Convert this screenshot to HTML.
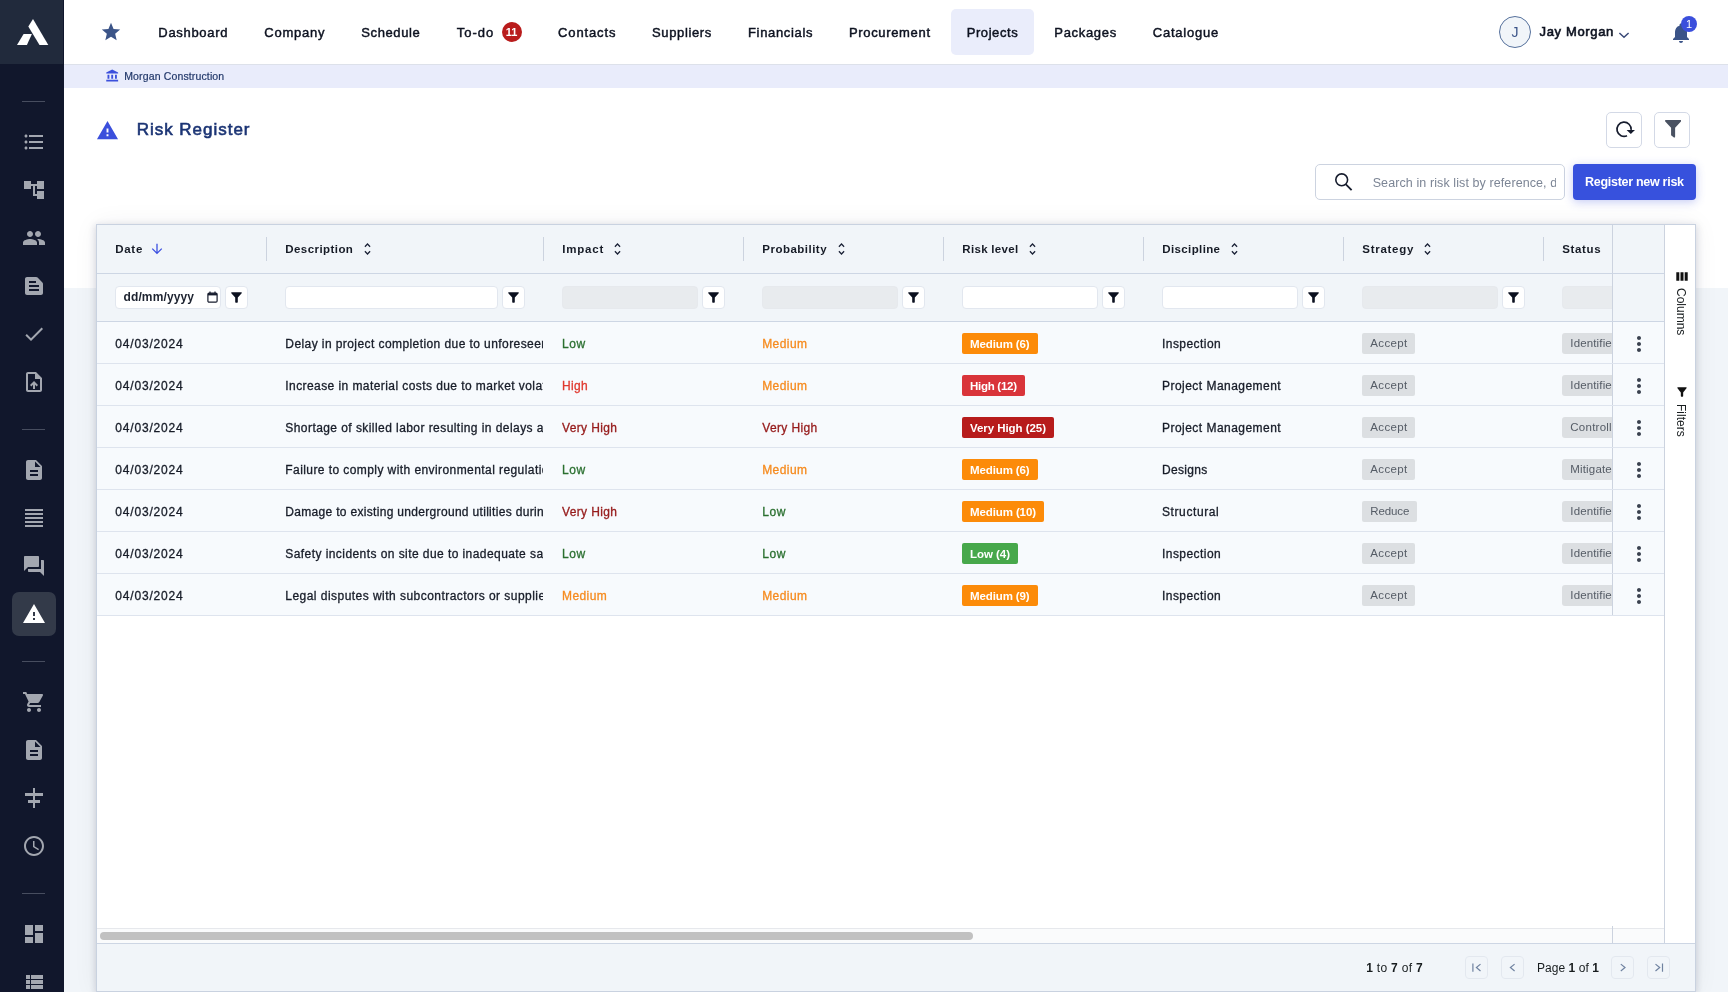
<!DOCTYPE html>
<html lang="en">
<head>
<meta charset="utf-8">
<title>Risk Register</title>
<style>
*{box-sizing:border-box;margin:0;padding:0}
html,body{width:1728px;height:992px;overflow:hidden}
body{font-family:"Liberation Sans",sans-serif;font-size:13px;color:#181d1f;background:#f1f5f9;position:relative}
svg{display:block}
#app{position:absolute;left:0;top:0;width:1728px;height:992px;overflow:hidden;will-change:transform}
b{font-weight:700}
.abs{position:absolute;white-space:nowrap}
/* sidebar */
#side{position:absolute;left:0;top:0;width:64px;height:992px;background:#11172c}
#logo{position:absolute;left:0;top:0;width:62.5px;height:64px;background:#212a3c;overflow:hidden}
.sdiv{position:absolute;left:22px;width:23px;height:1px;background:#474d5f}
#sact{position:absolute;left:12px;top:592px;width:44px;height:44px;border-radius:7px;background:#333a49}
/* top bar */
#top{position:absolute;left:64px;top:0;width:1664px;height:65px;background:#fff;border-bottom:1px solid #dde1ea}
.nav{height:20px;line-height:20px;font-size:13px;color:#0d1220;-webkit-text-stroke:.45px #0d1220}
.usr{-webkit-text-stroke:.6px #0d1220}
#projbox{position:absolute;left:887px;top:9px;width:83px;height:46px;border-radius:5px;background:#eaedfb}
.nbadge{width:20px;height:20px;line-height:20px;text-align:center;font-size:11px;font-weight:700;color:#fff}
.avj{width:32px;height:32px;line-height:32px;text-align:center;font-size:14px;color:#3b5488}
.bbadge{width:16px;height:16px;line-height:16px;text-align:center;font-size:11px;color:#fff}
#crumb{position:absolute;left:64px;top:65px;width:1664px;height:23px;background:#e9ecfb}
.crt{height:14px;line-height:14px;font-size:10.5px;color:#22386a;-webkit-text-stroke:.2px #22386a}
#white{position:absolute;left:64px;top:88px;width:1664px;height:200px;background:#fff}
.ttl{height:24px;line-height:24px;font-size:17px;color:#1b3474;-webkit-text-stroke:.6px #1b3474}
.tbtn{position:absolute;width:36px;height:36px;border:1px solid #d3d9e6;border-radius:5px;background:#fff}
#search{position:absolute;left:1251px;top:76px;width:250px;height:36px;border:1px solid #ccd3e0;border-radius:5px;background:#fff;overflow:hidden}
.pht{width:183.500px;overflow:hidden;height:18px;line-height:18px;font-size:12.5px;color:#7c8595}
#regbtn{position:absolute;left:1509px;top:76px;width:123px;height:36px;border-radius:4px;background:#3751dd;box-shadow:0 2px 10px rgba(59,79,220,.3)}
.regt{height:18px;line-height:18px;font-size:12.5px;font-weight:700;color:#fff}
/* grid */
#grid{position:absolute;left:96px;top:224px;width:1600px;height:768px;background:#fff;border:1px solid #c9d2e0;box-shadow:0 2px 7px 1px rgba(20,30,60,.15),0 0 24px rgba(20,30,60,.06)}
#ghead{position:absolute;left:0;top:0;width:1567px;height:49px;background:#f1f5f9;border-bottom:1px solid #cdd6e4}
#gfilt{position:absolute;left:0;top:49px;width:1567px;height:48px;background:#f1f5f9;border-bottom:1px solid #cdd6e4;overflow:hidden}
.hsep{position:absolute;top:12px;width:1px;height:24px;background:#ccd3df}
.ht{height:18px;line-height:18px;font-size:11.5px;font-weight:700;color:#161b26}
.fin{position:absolute;top:11.500px;height:23.500px;background:#fff;border:1px solid #e2e7ef;border-radius:4px}
.fin.dis{background:#e8ebee;border-color:#e6e9ed}
.fbt{position:absolute;top:11.500px;width:23.300px;height:23.500px;background:#fff;border:1px solid #e2e7ef;border-radius:4px}
.dtt{height:16px;line-height:16px;font-size:12px;font-weight:700;color:#1d2330}
.row{position:absolute;left:0;width:1567px;height:42px;background:#f7fafd;border-bottom:1px solid #dee4ee;overflow:hidden}
.c{height:41px;line-height:44.600px;overflow:hidden;font-size:12px;color:#171c28;-webkit-text-stroke:.3px}
.bd{position:absolute;top:10.500px;height:21px;line-height:22px;border-radius:2px;font-size:11.5px;font-weight:700;color:#fff;white-space:nowrap;overflow:hidden}
.gb{position:absolute;top:10.500px;height:21px;line-height:21px;border-radius:2px;font-size:11.5px;color:#555c66;background:#dcdfe2;white-space:nowrap;overflow:hidden}
.pinh{position:absolute;left:1515px;top:0;width:52px;background:#f1f5f9;border-left:1px solid #ccd3df}
.pin{position:absolute;left:1515px;top:0;width:52px;height:41px;background:#f7fafd;border-left:1px solid #ccd3df}
.lo{color:#2b7030}.me{color:#f68b1f}.hi{color:#e0392f}.vh{color:#961b1b}
.bme{background:#fc8b09}.bhi{background:#d9343a}.bvh{background:#b71c1c}.blo{background:#47a84b}
#hscroll{position:absolute;left:0;top:703px;width:1567px;height:15px;background:#fafbfc;border-top:1px solid #e6e8ec}
#thumb{position:absolute;left:2.500px;top:3px;width:873px;height:8px;border-radius:4px;background:#c1c1c1}
#gside{position:absolute;left:1567px;top:0;width:31px;height:718px;background:#fff;border-left:1px solid #ccd3df}
.vt{writing-mode:vertical-rl;width:16px;line-height:16px;font-size:12px;color:#181d1f}
#pag{position:absolute;left:0;top:718px;width:1598px;height:48px;background:#f1f5f9;border-top:1px solid #cdd6e4}
.pgt{height:18px;line-height:18px;font-size:12px;color:#181d1f}
.pbt{position:absolute;top:12px;width:23px;height:23px;border:1px solid #e3e8ef;border-radius:4px}
</style>
</head>
<body>
<div id="app">
<div id="side">
<div id="logo"><svg width="64" height="64" viewBox="0 0 64 64"><polygon points="33,19 48.3,45 39.5,45 28.3,26.5" fill="#fff"/><polygon points="23.6,34.1 31.9,34.1 26.9,45 17,45" fill="#fff"/></svg></div>
<div id="sact"></div>
<div class="sdiv" style="top:101px"></div>
<div class="sdiv" style="top:429px"></div>
<div class="sdiv" style="top:661px"></div>
<div class="sdiv" style="top:893px"></div>
<svg class="abs" style="left:22px;top:130px" width="24" height="24" viewBox="0 0 24 24"><path fill="#a3a7b0" d="M4 10.5c-.83 0-1.5.67-1.5 1.5s.67 1.5 1.5 1.5 1.5-.67 1.5-1.5-.67-1.5-1.5-1.5zm0-6c-.83 0-1.5.67-1.5 1.5S3.17 7.5 4 7.5 5.5 6.83 5.5 6 4.83 4.5 4 4.5zm0 12c-.83 0-1.5.68-1.5 1.5s.68 1.5 1.5 1.5 1.5-.68 1.5-1.5-.67-1.5-1.5-1.5zM7 19h14v-2H7v2zm0-6h14v-2H7v2zm0-8v2h14V5H7z"/></svg>
<svg class="abs" style="left:22px;top:178px" width="24" height="24" viewBox="0 0 24 24"><path fill="#a3a7b0" d="M22 11V3h-7v3H9V3H2v8h7V8h2v10h4v3h7v-8h-7v3h-2V8h2v3z"/></svg>
<svg class="abs" style="left:22px;top:226px" width="24" height="24" viewBox="0 0 24 24"><path fill="#a3a7b0" d="M16 11c1.66 0 2.99-1.34 2.99-3S17.66 5 16 5c-1.66 0-3 1.34-3 3s1.34 3 3 3zm-8 0c1.66 0 2.99-1.34 2.99-3S9.66 5 8 5C6.34 5 5 6.34 5 8s1.34 3 3 3zm0 2c-2.33 0-7 1.17-7 3.5V19h14v-2.5c0-2.33-4.67-3.5-7-3.5zm8 0c-.29 0-.62.02-.97.05 1.16.84 1.97 1.97 1.97 3.45V19h6v-2.5c0-2.33-4.67-3.5-7-3.5z"/></svg>
<svg class="abs" style="left:22px;top:274px" width="24" height="24" viewBox="0 0 24 24"><path fill="#a3a7b0" d="M20.41 8.41l-4.83-4.83c-.37-.37-.88-.58-1.41-.58H5c-1.100 0-2 .9-2 2v14c0 1.100.9 2 2 2h14c1.100 0 2-.9 2-2V9.830c0-.53-.21-1.040-.59-1.420zM7 7h7v2H7V7zm10 10H7v-2h10v2zm0-4H7v-2h10v2z"/></svg>
<svg class="abs" style="left:22px;top:322px" width="24" height="24" viewBox="0 0 24 24"><path fill="#a3a7b0" d="M9 16.17L4.83 12l-1.42 1.41L9 19 21 7l-1.41-1.41z"/></svg>
<svg class="abs" style="left:22px;top:370px" width="24" height="24" viewBox="0 0 24 24"><path fill="#a3a7b0" d="M14 2H6c-1.1 0-2 .9-2 2v16c0 1.1.9 2 2 2h12c1.1 0 2-.9 2-2V8l-6-6zm4 18H6V4h7v5h5v11zM8 15.01l1.41 1.41L11 14.84V19h2v-4.16l1.59 1.59L16 15.01 12.01 11z"/></svg>
<svg class="abs" style="left:22px;top:458px" width="24" height="24" viewBox="0 0 24 24"><path fill="#a3a7b0" d="M14 2H6c-1.1 0-1.99.9-1.99 2L4 20c0 1.1.89 2 1.99 2H18c1.1 0 2-.9 2-2V8l-6-6zm2 16H8v-2h8v2zm0-4H8v-2h8v2zm-3-5V3.5L18.5 9H13z"/></svg>
<svg class="abs" style="left:22px;top:506px" width="24" height="24" viewBox="0 0 24 24"><path fill="#a3a7b0" d="M3 21h18v-2H3v2zm0-4h18v-2H3v2zm0-4h18v-2H3v2zm0-4h18V7H3v2zm0-6v2h18V3H3z"/></svg>
<svg class="abs" style="left:22px;top:554px" width="24" height="24" viewBox="0 0 24 24"><path fill="#a3a7b0" d="M21 6h-2v9H6v2c0 .55.45 1 1 1h11l4 4V7c0-.55-.45-1-1-1zm-4 6V3c0-.55-.45-1-1-1H3c-.55 0-1 .45-1 1v14l4-4h10c.55 0 1-.45 1-1z"/></svg>
<svg class="abs" style="left:22px;top:602px" width="24" height="24" viewBox="0 0 24 24"><path fill="#fff" d="M1 21h22L12 2 1 21zm12-3h-2v-2h2v2zm0-4h-2v-4h2v4z"/></svg>
<svg class="abs" style="left:22px;top:690px" width="24" height="24" viewBox="0 0 24 24"><path fill="#a3a7b0" d="M7 18c-1.1 0-1.99.9-1.99 2S5.9 22 7 22s2-.9 2-2-.9-2-2-2zM1 2v2h2l3.6 7.59-1.35 2.45c-.16.28-.25.61-.25.96 0 1.1.9 2 2 2h12v-2H7.42c-.14 0-.25-.11-.25-.25l.03-.12.9-1.63h7.45c.75 0 1.41-.41 1.75-1.03l3.58-6.49c.08-.14.12-.31.12-.48 0-.55-.45-1-1-1H5.21l-.94-2H1zm16 16c-1.1 0-1.99.9-1.99 2s.89 2 1.99 2 2-.9 2-2-.9-2-2-2z"/></svg>
<svg class="abs" style="left:22px;top:738px" width="24" height="24" viewBox="0 0 24 24"><path fill="#a3a7b0" d="M14 2H6c-1.1 0-1.99.9-1.99 2L4 20c0 1.1.89 2 1.99 2H18c1.1 0 2-.9 2-2V8l-6-6zm2 16H8v-2h8v2zm0-4H8v-2h8v2zm-3-5V3.5L18.5 9H13z"/></svg>
<svg class="abs" style="left:22px;top:786px" width="24" height="24" viewBox="0 0 24 24"><path fill="#a3a7b0" d="M11 2h2v5h8v3h-8v4h5v3h-5v5h-2v-5H6v-3h5v-4H3V7h8V2z"/></svg>
<svg class="abs" style="left:22px;top:834px" width="24" height="24" viewBox="0 0 24 24"><path fill="#a3a7b0" d="M11.99 2C6.47 2 2 6.48 2 12s4.47 10 9.99 10C17.52 22 22 17.52 22 12S17.52 2 11.99 2zM12 20c-4.42 0-8-3.58-8-8s3.58-8 8-8 8 3.58 8 8-3.58 8-8 8zm.5-13H11v6l5.25 3.15.75-1.23-4.5-2.67z"/></svg>
<svg class="abs" style="left:22px;top:922px" width="24" height="24" viewBox="0 0 24 24"><path fill="#a3a7b0" d="M3 13h8V3H3v10zm0 8h8v-6H3v6zm10 0h8V11h-8v10zm0-18v6h8V3h-8z"/></svg>
<svg class="abs" style="left:22px;top:970px" width="24" height="24" viewBox="0 0 24 24"><path fill="#a3a7b0" d="M4 14h4v-4H4v4zm0 5h4v-4H4v4zM4 9h4V5H4v4zm5 5h12v-4H9v4zm0 5h12v-4H9v4zM9 5v4h12V5H9z"/></svg>
</div>
<div id="top">
<div id="projbox"></div>
<svg class="abs" style="left:36px;top:21px" width="22" height="22" viewBox="0 0 24 24"><path fill="#3b5488" d="M12 17.27L18.18 21l-1.64-7.03L22 9.24l-7.19-.61L12 2 9.19 8.63 2 9.24l5.46 4.73L5.82 21z"/></svg>
<span id="n0" class="abs nav" style="left:94.3px;top:22.6px;letter-spacing:0.699px;">Dashboard</span>
<span id="n1" class="abs nav" style="left:200.3px;top:22.6px;letter-spacing:0.76px;">Company</span>
<span id="n2" class="abs nav" style="left:297.3px;top:22.6px;letter-spacing:0.597px;">Schedule</span>
<span id="n3" class="abs nav" style="left:392.8px;top:22.6px;letter-spacing:0.992px;">To-do</span>
<span id="n4" class="abs nav" style="left:494px;top:22.6px;letter-spacing:0.884px;">Contacts</span>
<span id="n5" class="abs nav" style="left:588px;top:22.6px;letter-spacing:0.637px;">Suppliers</span>
<span id="n6" class="abs nav" style="left:684px;top:22.6px;letter-spacing:0.663px;">Financials</span>
<span id="n7" class="abs nav" style="left:785px;top:22.6px;letter-spacing:0.658px;">Procurement</span>
<span id="n8" class="abs nav" style="left:902.7px;top:22.6px;letter-spacing:0.576px;">Projects</span>
<span id="n9" class="abs nav" style="left:990.3px;top:22.6px;letter-spacing:0.687px;">Packages</span>
<span id="n10" class="abs nav" style="left:1088.8px;top:22.6px;letter-spacing:0.777px;">Catalogue</span>
<div class="abs" style="left:437.5px;top:22px;width:20px;height:20px;border-radius:10px;background:#b91c1c"></div>
<span id="nb" class="abs nbadge" style="left:437.5px;top:22px;">11</span>
<div class="abs" style="left:1435px;top:16px;width:32px;height:32px;border-radius:16px;background:#f1f5f9;border:1px solid #56719c"></div>
<span id="av" class="abs avj" style="left:1435px;top:16px;">J</span>
<span id="user" class="abs nav usr" style="left:1475.5px;top:22.4px;letter-spacing:0.653px;">Jay Morgan</span>
<svg class="abs" style="left:1554px;top:31px" width="12" height="9" viewBox="0 0 12 9"><polyline points="1.4,2 6,6.3 10.6,2" fill="none" stroke="#3a4a78" stroke-width="1.5"/></svg>
<svg class="abs" style="left:1605px;top:21px" width="24" height="24" viewBox="0 0 24 24"><path fill="#3b5488" d="M12 22c1.1 0 2-.9 2-2h-4c0 1.1.89 2 2 2zm6-6v-5c0-3.07-1.64-5.64-4.5-6.32V4c0-.83-.67-1.5-1.5-1.5s-1.5.67-1.5 1.5v.68C7.63 5.36 6 7.92 6 11v5l-2 2v1h16v-1l-2-2z"/></svg>
<div class="abs" style="left:1617px;top:16px;width:16px;height:16px;border-radius:8px;background:#3b4fdc"></div>
<span id="bb" class="abs bbadge" style="left:1617px;top:16px;">1</span>
</div>
<div id="crumb">
<svg class="abs" style="left:40.700px;top:4.200px" width="15" height="13.700" viewBox="0 0 24 24" preserveAspectRatio="none"><path fill="#3b4fdc" d="M4 10v7h3v-7H4zm6 0v7h3v-7h-3zM2 22h19v-3H2v3zm14-12v7h3v-7h-3zm-4.500-9L2 6v2h19V6l-9.500-5z"/></svg>
<span id="cr" class="abs crt" style="left:60.2px;top:4px;letter-spacing:0.141px;">Morgan Construction</span>
</div>
<div id="white">
<svg class="abs" style="left:32px;top:31.4px" width="23" height="23" viewBox="0 0 24 24"><path fill="#3b4fdc" d="M1 21h22L12 2 1 21zm12-3h-2v-2h2v2zm0-4h-2v-4h2v4z"/></svg>
<span id="title" class="abs ttl" style="left:72.7px;top:30.4px;letter-spacing:0.976px;">Risk Register</span>
<div class="tbtn" style="left:1542px;top:24px"><svg width="34" height="34" viewBox="0 0 34 34"><path d="M20 22.700A7.100 7.100 0 1 1 24.100 16.900" fill="none" stroke="#161c2d" stroke-width="1.700"/><polygon points="19.600,17 28,17 23.800,21" fill="#161c2d"/></svg></div>
<div class="tbtn" style="left:1590px;top:24px"><svg style="position:absolute;left:9.900px;top:7px" width="16.200" height="17.700" viewBox="0 0 512 512" preserveAspectRatio="none"><path fill="#4a5262" d="M487.976 0H24.028C2.71 0-8.047 25.866 7.058 40.971L192 225.941V432c0 7.831 3.821 15.170 10.237 19.662l80 55.980C298.020 518.690 320 507.493 320 487.980V225.941l184.947-184.970C520.021 25.896 509.338 0 487.976 0z"/></svg></div>
<div id="search"><svg class="abs" style="left:17px;top:7px" width="22" height="22" viewBox="0 0 22 22"><circle cx="8.700" cy="7.800" r="5.900" fill="none" stroke="#161c2d" stroke-width="1.600"/><path d="M12.900 12.300l5.700 5.800" stroke="#161c2d" stroke-width="1.800"/></svg><span id="ph" class="abs pht" style="left:56.7px;top:8.5px;letter-spacing:0.094px;">Search in risk list by reference, description</span></div>
<div id="regbtn"><span id="reg" class="abs regt" style="left:12px;top:9px;letter-spacing:-0.282px;">Register new risk</span></div>
</div>
<div id="grid">
<div id="ghead">
<span id="h0" class="abs ht" style="left:18.3px;top:15.2px;letter-spacing:0.688px;">Date</span>
<svg class="abs" style="left:54.050px;top:18px" width="12" height="12" viewBox="0 0 12 12"><path d="M6 .7v9.600M1.250 5.600L6 10.400l4.750-4.800" fill="none" stroke="#3b4fe0" stroke-width="1.300"/></svg>
<span id="h1" class="abs ht" style="left:188.3px;top:15.2px;letter-spacing:0.433px;">Description</span>
<div class="hsep" style="left:169px"></div>
<svg class="abs" style="left:266.9px;top:17px" width="7" height="14" viewBox="0 0 7 14"><path d="M.9 4.700L3.500 2l2.600 2.700M.9 9.300l2.600 2.700 2.600-2.700" fill="none" stroke="#1a2136" stroke-width="1.250"/></svg>
<span id="h2" class="abs ht" style="left:465.3px;top:15.2px;letter-spacing:0.784px;">Impact</span>
<div class="hsep" style="left:446px"></div>
<svg class="abs" style="left:517.3px;top:17px" width="7" height="14" viewBox="0 0 7 14"><path d="M.9 4.700L3.500 2l2.600 2.700M.9 9.300l2.600 2.700 2.600-2.700" fill="none" stroke="#1a2136" stroke-width="1.250"/></svg>
<span id="h3" class="abs ht" style="left:665.3px;top:15.2px;letter-spacing:0.486px;">Probability</span>
<div class="hsep" style="left:646px"></div>
<svg class="abs" style="left:740.6px;top:17px" width="7" height="14" viewBox="0 0 7 14"><path d="M.9 4.700L3.500 2l2.600 2.700M.9 9.300l2.600 2.700 2.600-2.700" fill="none" stroke="#1a2136" stroke-width="1.250"/></svg>
<span id="h4" class="abs ht" style="left:865.3px;top:15.2px;letter-spacing:0.314px;">Risk level</span>
<div class="hsep" style="left:846px"></div>
<svg class="abs" style="left:932.2px;top:17px" width="7" height="14" viewBox="0 0 7 14"><path d="M.9 4.700L3.500 2l2.600 2.700M.9 9.300l2.600 2.700 2.600-2.700" fill="none" stroke="#1a2136" stroke-width="1.250"/></svg>
<span id="h5" class="abs ht" style="left:1065.3px;top:15.2px;letter-spacing:0.375px;">Discipline</span>
<div class="hsep" style="left:1046px"></div>
<svg class="abs" style="left:1134.0px;top:17px" width="7" height="14" viewBox="0 0 7 14"><path d="M.9 4.700L3.500 2l2.600 2.700M.9 9.300l2.600 2.700 2.600-2.700" fill="none" stroke="#1a2136" stroke-width="1.250"/></svg>
<span id="h6" class="abs ht" style="left:1265.3px;top:15.2px;letter-spacing:0.71px;">Strategy</span>
<div class="hsep" style="left:1246px"></div>
<svg class="abs" style="left:1327.3px;top:17px" width="7" height="14" viewBox="0 0 7 14"><path d="M.9 4.700L3.500 2l2.600 2.700M.9 9.300l2.600 2.700 2.600-2.700" fill="none" stroke="#1a2136" stroke-width="1.250"/></svg>
<span id="h7" class="abs ht" style="left:1465.3px;top:15.2px;letter-spacing:0.629px;">Status</span>
<div class="hsep" style="left:1446px"></div>
<div class="pinh" style="height:48px"></div>
</div>
<div id="gfilt">
<div class="fin" style="left:18px;width:106px"></div>
<div class="fbt" style="left:128.2px"><svg style="position:absolute;left:5.100px;top:5.700px" width="11" height="11.500" viewBox="0 0 11 12" preserveAspectRatio="none"><path fill="#0c1120" d="M.3.200h10.400v1.100L6.800 5.700v4.900l-.6.600H4.800l-.6-.6V5.700L.3 1.300z"/></svg></div>
<div class="fin" style="left:188px;width:213px"></div>
<div class="fbt" style="left:405.2px"><svg style="position:absolute;left:5.100px;top:5.700px" width="11" height="11.500" viewBox="0 0 11 12" preserveAspectRatio="none"><path fill="#0c1120" d="M.3.200h10.400v1.100L6.800 5.700v4.900l-.6.600H4.800l-.6-.6V5.700L.3 1.300z"/></svg></div>
<div class="fin dis" style="left:465px;width:136px"></div>
<div class="fbt" style="left:605.2px"><svg style="position:absolute;left:5.100px;top:5.700px" width="11" height="11.500" viewBox="0 0 11 12" preserveAspectRatio="none"><path fill="#0c1120" d="M.3.200h10.400v1.100L6.800 5.700v4.900l-.6.600H4.800l-.6-.6V5.700L.3 1.300z"/></svg></div>
<div class="fin dis" style="left:665px;width:136px"></div>
<div class="fbt" style="left:805.2px"><svg style="position:absolute;left:5.100px;top:5.700px" width="11" height="11.500" viewBox="0 0 11 12" preserveAspectRatio="none"><path fill="#0c1120" d="M.3.200h10.400v1.100L6.800 5.700v4.900l-.6.600H4.800l-.6-.6V5.700L.3 1.300z"/></svg></div>
<div class="fin" style="left:865px;width:136px"></div>
<div class="fbt" style="left:1005.2px"><svg style="position:absolute;left:5.100px;top:5.700px" width="11" height="11.500" viewBox="0 0 11 12" preserveAspectRatio="none"><path fill="#0c1120" d="M.3.200h10.400v1.100L6.800 5.700v4.900l-.6.600H4.800l-.6-.6V5.700L.3 1.300z"/></svg></div>
<div class="fin" style="left:1065px;width:136px"></div>
<div class="fbt" style="left:1205.2px"><svg style="position:absolute;left:5.100px;top:5.700px" width="11" height="11.500" viewBox="0 0 11 12" preserveAspectRatio="none"><path fill="#0c1120" d="M.3.200h10.400v1.100L6.800 5.700v4.900l-.6.600H4.800l-.6-.6V5.700L.3 1.300z"/></svg></div>
<div class="fin dis" style="left:1265px;width:136px"></div>
<div class="fbt" style="left:1405.2px"><svg style="position:absolute;left:5.100px;top:5.700px" width="11" height="11.500" viewBox="0 0 11 12" preserveAspectRatio="none"><path fill="#0c1120" d="M.3.200h10.400v1.100L6.800 5.700v4.900l-.6.600H4.800l-.6-.6V5.700L.3 1.300z"/></svg></div>
<div class="fin dis" style="left:1465px;width:60px"></div>
<div class="pinh" style="height:47px"></div>
<span id="dt" class="abs dtt" style="left:26.5px;top:15.3px;letter-spacing:0.125px;">dd/mm/yyyy</span>
<svg class="abs" style="left:109.600px;top:16.700px" width="11" height="12" viewBox="0 0 11 12"><rect x="0.9" y="2.200" width="9.200" height="8.900" rx="1.200" fill="none" stroke="#161c2d" stroke-width="1.200"/><rect x="0.9" y="2.200" width="9.200" height="2.200" fill="#161c2d"/><path d="M3 .6v2M8 .6v2" stroke="#161c2d" stroke-width="1.200"/></svg>
</div>
<div class="row" style="top:97px">
<span id="r0a" class="abs c" style="left:18.3px;top:0px;letter-spacing:0.815px;">04/03/2024</span>
<span id="r0b" class="abs c" style="left:188.3px;top:0px;letter-spacing:0.42px;width:258px;">Delay in project completion due to unforeseen circumstances</span>
<span id="r0c" class="abs c lo" style="left:465px;top:0px;letter-spacing:0.592px;">Low</span>
<span id="r0d" class="abs c me" style="left:665.2px;top:0px;letter-spacing:0.422px;">Medium</span>
<span class="bd bme" style="left:865px;width:76.0px"><span id="r0e" class="abs " style="left:8px;top:0px;letter-spacing:-0.111px;line-height:22px;">Medium (6)</span></span>
<span id="r0f" class="abs c" style="left:1065px;top:0px;letter-spacing:0.444px;">Inspection</span>
<span class="gb" style="left:1265px;width:53.3px"><span id="r0g" class="abs " style="left:8.3px;top:0px;letter-spacing:0.366px;line-height:21px;">Accept</span></span>
<span class="gb" style="left:1465px;width:60px;border-radius:3px 0 0 3px"><span id="r0h" class="abs " style="left:8.3px;top:0px;letter-spacing:0.147px;line-height:21px;">Identified</span></span>
<div class="pin"><svg class="abs" style="left:14px;top:10.4px" width="24" height="24" viewBox="0 0 24 24"><path fill="#3a414f" d="M12 8c1.1 0 2-.9 2-2s-.9-2-2-2-2 .9-2 2 .9 2 2 2zm0 2c-1.1 0-2 .9-2 2s.9 2 2 2 2-.9 2-2-.9-2-2-2zm0 6c-1.1 0-2 .9-2 2s.9 2 2 2 2-.9 2-2-.9-2-2-2z"/></svg></div>
</div>
<div class="row" style="top:139px">
<span id="r1a" class="abs c" style="left:18.3px;top:0px;letter-spacing:0.815px;">04/03/2024</span>
<span id="r1b" class="abs c" style="left:188.3px;top:0px;letter-spacing:0.425px;width:258px;">Increase in material costs due to market volatility</span>
<span id="r1c" class="abs c hi" style="left:465px;top:0px;letter-spacing:0.304px;">High</span>
<span id="r1d" class="abs c me" style="left:665.2px;top:0px;letter-spacing:0.422px;">Medium</span>
<span class="bd bhi" style="left:865px;width:63.3px"><span id="r1e" class="abs " style="left:8px;top:0px;letter-spacing:-0.275px;line-height:22px;">High (12)</span></span>
<span id="r1f" class="abs c" style="left:1065px;top:0px;letter-spacing:0.469px;">Project Management</span>
<span class="gb" style="left:1265px;width:53.3px"><span id="r1g" class="abs " style="left:8.3px;top:0px;letter-spacing:0.366px;line-height:21px;">Accept</span></span>
<span class="gb" style="left:1465px;width:60px;border-radius:3px 0 0 3px"><span id="r1h" class="abs " style="left:8.3px;top:0px;letter-spacing:0.147px;line-height:21px;">Identified</span></span>
<div class="pin"><svg class="abs" style="left:14px;top:10.4px" width="24" height="24" viewBox="0 0 24 24"><path fill="#3a414f" d="M12 8c1.1 0 2-.9 2-2s-.9-2-2-2-2 .9-2 2 .9 2 2 2zm0 2c-1.1 0-2 .9-2 2s.9 2 2 2 2-.9 2-2-.9-2-2-2zm0 6c-1.1 0-2 .9-2 2s.9 2 2 2 2-.9 2-2-.9-2-2-2z"/></svg></div>
</div>
<div class="row" style="top:181px">
<span id="r2a" class="abs c" style="left:18.3px;top:0px;letter-spacing:0.815px;">04/03/2024</span>
<span id="r2b" class="abs c" style="left:188.3px;top:0px;letter-spacing:0.435px;width:258px;">Shortage of skilled labor resulting in delays and quality issues</span>
<span id="r2c" class="abs c vh" style="left:465px;top:0px;letter-spacing:0.371px;">Very High</span>
<span id="r2d" class="abs c vh" style="left:665.2px;top:0px;letter-spacing:0.371px;">Very High</span>
<span class="bd bvh" style="left:865px;width:92.3px"><span id="r2e" class="abs " style="left:8px;top:0px;letter-spacing:-0.054px;line-height:22px;">Very High (25)</span></span>
<span id="r2f" class="abs c" style="left:1065px;top:0px;letter-spacing:0.469px;">Project Management</span>
<span class="gb" style="left:1265px;width:53.3px"><span id="r2g" class="abs " style="left:8.3px;top:0px;letter-spacing:0.366px;line-height:21px;">Accept</span></span>
<span class="gb" style="left:1465px;width:60px;border-radius:3px 0 0 3px"><span id="r2h" class="abs " style="left:8.3px;top:0px;letter-spacing:0.245px;line-height:21px;">Controlled</span></span>
<div class="pin"><svg class="abs" style="left:14px;top:10.4px" width="24" height="24" viewBox="0 0 24 24"><path fill="#3a414f" d="M12 8c1.1 0 2-.9 2-2s-.9-2-2-2-2 .9-2 2 .9 2 2 2zm0 2c-1.1 0-2 .9-2 2s.9 2 2 2 2-.9 2-2-.9-2-2-2zm0 6c-1.1 0-2 .9-2 2s.9 2 2 2 2-.9 2-2-.9-2-2-2z"/></svg></div>
</div>
<div class="row" style="top:223px">
<span id="r3a" class="abs c" style="left:18.3px;top:0px;letter-spacing:0.815px;">04/03/2024</span>
<span id="r3b" class="abs c" style="left:188.3px;top:0px;letter-spacing:0.422px;width:258px;">Failure to comply with environmental regulations</span>
<span id="r3c" class="abs c lo" style="left:465px;top:0px;letter-spacing:0.592px;">Low</span>
<span id="r3d" class="abs c me" style="left:665.2px;top:0px;letter-spacing:0.422px;">Medium</span>
<span class="bd bme" style="left:865px;width:76.0px"><span id="r3e" class="abs " style="left:8px;top:0px;letter-spacing:-0.111px;line-height:22px;">Medium (6)</span></span>
<span id="r3f" class="abs c" style="left:1065px;top:0px;letter-spacing:0.323px;">Designs</span>
<span class="gb" style="left:1265px;width:53.3px"><span id="r3g" class="abs " style="left:8.3px;top:0px;letter-spacing:0.366px;line-height:21px;">Accept</span></span>
<span class="gb" style="left:1465px;width:60px;border-radius:3px 0 0 3px"><span id="r3h" class="abs " style="left:8.3px;top:0px;letter-spacing:0.165px;line-height:21px;">Mitigated</span></span>
<div class="pin"><svg class="abs" style="left:14px;top:10.4px" width="24" height="24" viewBox="0 0 24 24"><path fill="#3a414f" d="M12 8c1.1 0 2-.9 2-2s-.9-2-2-2-2 .9-2 2 .9 2 2 2zm0 2c-1.1 0-2 .9-2 2s.9 2 2 2 2-.9 2-2-.9-2-2-2zm0 6c-1.1 0-2 .9-2 2s.9 2 2 2 2-.9 2-2-.9-2-2-2z"/></svg></div>
</div>
<div class="row" style="top:265px">
<span id="r4a" class="abs c" style="left:18.3px;top:0px;letter-spacing:0.815px;">04/03/2024</span>
<span id="r4b" class="abs c" style="left:188.3px;top:0px;letter-spacing:0.315px;width:258px;">Damage to existing underground utilities during excavation</span>
<span id="r4c" class="abs c vh" style="left:465px;top:0px;letter-spacing:0.371px;">Very High</span>
<span id="r4d" class="abs c lo" style="left:665.2px;top:0px;letter-spacing:0.592px;">Low</span>
<span class="bd bme" style="left:865px;width:82.3px"><span id="r4e" class="abs " style="left:8px;top:0px;letter-spacing:-0.109px;line-height:22px;">Medium (10)</span></span>
<span id="r4f" class="abs c" style="left:1065px;top:0px;letter-spacing:0.593px;">Structural</span>
<span class="gb" style="left:1265px;width:55.3px"><span id="r4g" class="abs " style="left:8.3px;top:0px;letter-spacing:-0.128px;line-height:21px;">Reduce</span></span>
<span class="gb" style="left:1465px;width:60px;border-radius:3px 0 0 3px"><span id="r4h" class="abs " style="left:8.3px;top:0px;letter-spacing:0.147px;line-height:21px;">Identified</span></span>
<div class="pin"><svg class="abs" style="left:14px;top:10.4px" width="24" height="24" viewBox="0 0 24 24"><path fill="#3a414f" d="M12 8c1.1 0 2-.9 2-2s-.9-2-2-2-2 .9-2 2 .9 2 2 2zm0 2c-1.1 0-2 .9-2 2s.9 2 2 2 2-.9 2-2-.9-2-2-2zm0 6c-1.1 0-2 .9-2 2s.9 2 2 2 2-.9 2-2-.9-2-2-2z"/></svg></div>
</div>
<div class="row" style="top:307px">
<span id="r5a" class="abs c" style="left:18.3px;top:0px;letter-spacing:0.815px;">04/03/2024</span>
<span id="r5b" class="abs c" style="left:188.3px;top:0px;letter-spacing:0.431px;width:258px;">Safety incidents on site due to inadequate safety measures</span>
<span id="r5c" class="abs c lo" style="left:465px;top:0px;letter-spacing:0.592px;">Low</span>
<span id="r5d" class="abs c lo" style="left:665.2px;top:0px;letter-spacing:0.592px;">Low</span>
<span class="bd blo" style="left:865px;width:56.3px"><span id="r5e" class="abs " style="left:8px;top:0px;letter-spacing:-0.042px;line-height:22px;">Low (4)</span></span>
<span id="r5f" class="abs c" style="left:1065px;top:0px;letter-spacing:0.444px;">Inspection</span>
<span class="gb" style="left:1265px;width:53.3px"><span id="r5g" class="abs " style="left:8.3px;top:0px;letter-spacing:0.366px;line-height:21px;">Accept</span></span>
<span class="gb" style="left:1465px;width:60px;border-radius:3px 0 0 3px"><span id="r5h" class="abs " style="left:8.3px;top:0px;letter-spacing:0.147px;line-height:21px;">Identified</span></span>
<div class="pin"><svg class="abs" style="left:14px;top:10.4px" width="24" height="24" viewBox="0 0 24 24"><path fill="#3a414f" d="M12 8c1.1 0 2-.9 2-2s-.9-2-2-2-2 .9-2 2 .9 2 2 2zm0 2c-1.1 0-2 .9-2 2s.9 2 2 2 2-.9 2-2-.9-2-2-2zm0 6c-1.1 0-2 .9-2 2s.9 2 2 2 2-.9 2-2-.9-2-2-2z"/></svg></div>
</div>
<div class="row" style="top:349px">
<span id="r6a" class="abs c" style="left:18.3px;top:0px;letter-spacing:0.815px;">04/03/2024</span>
<span id="r6b" class="abs c" style="left:188.3px;top:0px;letter-spacing:0.462px;width:258px;">Legal disputes with subcontractors or suppliers</span>
<span id="r6c" class="abs c me" style="left:465px;top:0px;letter-spacing:0.422px;">Medium</span>
<span id="r6d" class="abs c me" style="left:665.2px;top:0px;letter-spacing:0.422px;">Medium</span>
<span class="bd bme" style="left:865px;width:76.0px"><span id="r6e" class="abs " style="left:8px;top:0px;letter-spacing:-0.111px;line-height:22px;">Medium (9)</span></span>
<span id="r6f" class="abs c" style="left:1065px;top:0px;letter-spacing:0.444px;">Inspection</span>
<span class="gb" style="left:1265px;width:53.3px"><span id="r6g" class="abs " style="left:8.3px;top:0px;letter-spacing:0.366px;line-height:21px;">Accept</span></span>
<span class="gb" style="left:1465px;width:60px;border-radius:3px 0 0 3px"><span id="r6h" class="abs " style="left:8.3px;top:0px;letter-spacing:0.147px;line-height:21px;">Identified</span></span>
<div class="pin"><svg class="abs" style="left:14px;top:10.4px" width="24" height="24" viewBox="0 0 24 24"><path fill="#3a414f" d="M12 8c1.1 0 2-.9 2-2s-.9-2-2-2-2 .9-2 2 .9 2 2 2zm0 2c-1.1 0-2 .9-2 2s.9 2 2 2 2-.9 2-2-.9-2-2-2zm0 6c-1.1 0-2 .9-2 2s.9 2 2 2 2-.9 2-2-.9-2-2-2z"/></svg></div>
</div>
<div id="hscroll"><div id="thumb"></div><div class="abs" style="left:1515px;top:-3px;width:1px;height:17px;background:#ccd3df"></div></div>
<div id="gside">
<svg class="abs" style="left:10.500px;top:46.800px" width="12" height="9" viewBox="0 0 12 9"><path d="M.3.3h3v8.400h-3zM4.500.3h3v8.400h-3zM8.700.3h3v8.400h-3z" fill="#111"/></svg>
<span id="vc" class="abs vt" style="left:8px;top:63px;">Columns</span>
<svg class="abs" style="left:9.500px;top:160px" width="14" height="14" viewBox="0 0 24 24"><path fill="#111" d="M4.25 5.61C6.27 8.2 10 13 10 13v6c0 .55.45 1 1 1h2c.55 0 1-.45 1-1v-6s3.72-4.8 5.74-7.39c.51-.66.04-1.61-.79-1.61H5.04c-.83 0-1.3.95-.79 1.61z"/></svg>
<span id="vf" class="abs vt" style="left:8px;top:178.5px;">Filters</span>
</div>
<div id="pag">
<span id="p1" class="abs pgt" style="left:1269.2px;top:15px;letter-spacing:.3px;"><b>1</b> to <b>7</b> of <b>7</b></span>
<span id="p2" class="abs pgt" style="left:1439.9px;top:15px;letter-spacing:.07px;">Page <b>1</b> of <b>1</b></span>
<div class="pbt" style="left:1368px"><svg width="21" height="21" viewBox="0 0 21 21" fill="none" stroke="#6f82a0" stroke-width="1.200"><path d="M6.900 6.500v8.300M14.500 7.100l-4.100 3.400 4.100 3.500"/></svg></div>
<div class="pbt" style="left:1404px"><svg width="21" height="21" viewBox="0 0 21 21" fill="none" stroke="#6f82a0" stroke-width="1.200"><path d="M12.600 7.100l-4.200 3.400 4.200 3.500"/></svg></div>
<div class="pbt" style="left:1514px"><svg width="21" height="21" viewBox="0 0 21 21" fill="none" stroke="#6f82a0" stroke-width="1.200"><path d="M8.800 7.100l4.200 3.400-4.200 3.500"/></svg></div>
<div class="pbt" style="left:1550px"><svg width="21" height="21" viewBox="0 0 21 21" fill="none" stroke="#6f82a0" stroke-width="1.200"><path d="M14.500 6.500v8.300M7.500 7.100l4.200 3.400-4.200 3.500"/></svg></div>
</div>
</div>
</div>
</body>
</html>
